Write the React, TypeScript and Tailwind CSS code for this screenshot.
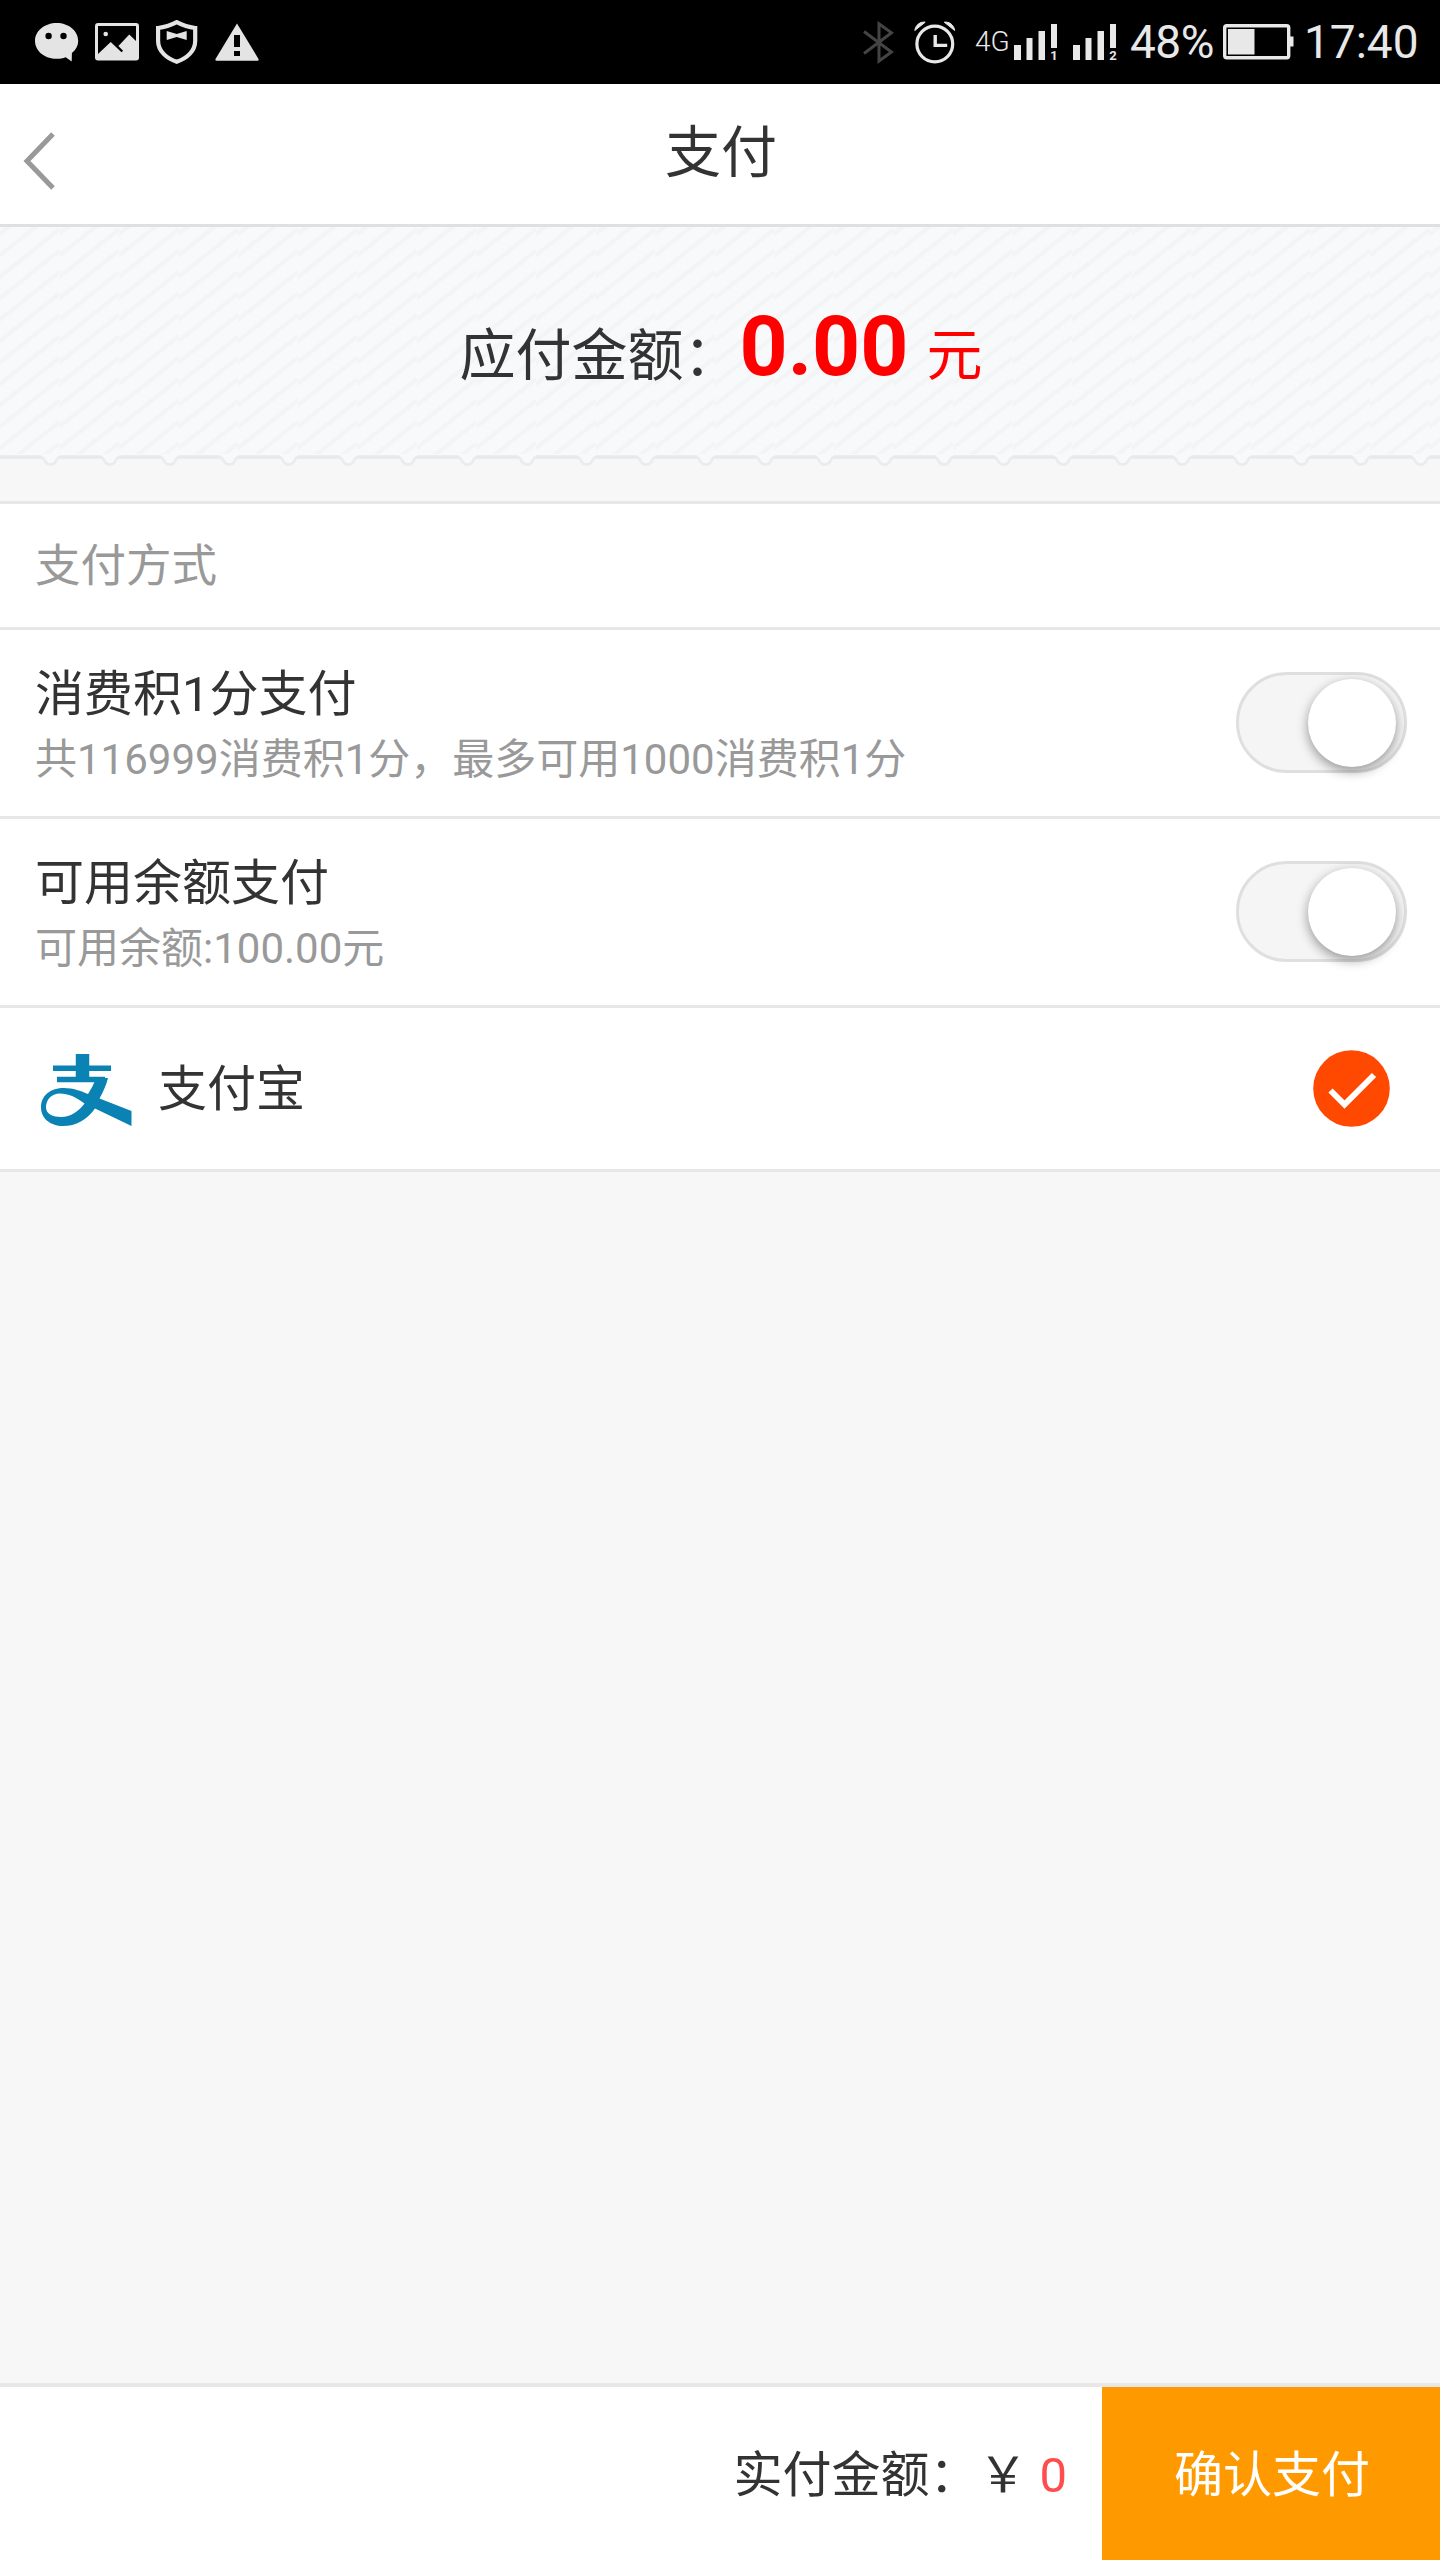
import type { ReactNode } from "react";

const WechatIcon = () => (
  <svg className="w-[44px] h-[40px]" viewBox="0 0 44 40">
    <path
      fill="#e4e4e4"
      fillRule="evenodd"
      d="M21.700 1C9.700 1 0 8.900 0 18.900s9.700 17.800 21.700 17.800c3.200 0 6.200-.5 9-1.500l6 4.200.2-8.300c4-3.300 6.300-7.600 6.300-12.200C43.200 8.900 33.700 1 21.700 1ZM13.600 10.800a3.200 3.200 0 1 1 0 6.400 3.200 3.200 0 0 1 0-6.400Zm14.900 0a3.200 3.200 0 1 1 0 6.400 3.200 3.200 0 0 1 0-6.400Z"
    />
  </svg>
);

const PictureIcon = () => (
  <svg className="w-[44px] h-[38px]" viewBox="0 0 44 38" fill="#e4e4e4">
    <rect x="1.500" y="1.500" width="41" height="34.500" rx="1.500" fill="none" stroke="#e4e4e4" strokeWidth="3" />
    <circle cx="10.700" cy="11" r="2.300" />
    <path d="M3 31 15.700 19l10.800 10.200 1.600-1.400-4.700-4.700L34.300 11.500 43 20v16H3Z" />
  </svg>
);

const ShieldIcon = () => (
  <svg className="w-[42px] h-[44px]" viewBox="0 0 42 44">
    <path
      d="M20.700 2.200C15 5.200 8.700 7.300 2.100 8v13c0 10 8.500 17.500 18.600 20.800C30.800 38.500 39.200 31 39.200 21V8c-6.500-.7-12.800-2.800-18.500-5.800Z"
      fill="none"
      stroke="#e4e4e4"
      strokeWidth="4.200"
    />
    <path d="m10.700 11 10 3 10-3v9l-10-3-10 3Z" fill="#e4e4e4" />
  </svg>
);

const WarningIcon = () => (
  <svg className="w-[44px] h-[38px]" viewBox="0 0 44 38">
    <path d="M22 .5 43.500 36q.5 1.700-1 1.700h-41Q0 37.700.5 36Z" fill="#e4e4e4" />
    <path d="M19 12h6v12h-6ZM19 28h6v5h-6Z" fill="#000" />
  </svg>
);

const BluetoothIcon = () => (
  <svg className="w-[31px] h-[43px]" viewBox="0 0 31 43">
    <path d="m1 10.500 27.500 20.500L16 40V2.800l12.500 9L1 32.500" fill="none" stroke="#444" strokeWidth="3" />
  </svg>
);

const AlarmIcon = () => (
  <svg className="w-[42px] h-[43px]" viewBox="0 0 42 43">
    <g fill="none" stroke="#e8e8e8">
      <circle cx="20.800" cy="23" r="17.900" strokeWidth="3.200" />
      <path d="M21.200 14v10.400h12" strokeWidth="3.400" />
    </g>
    <path d="M.8 9.500C1.500 4 6.500.3 11.200 1.200ZM40.700 9.500C40 4 35 .3 30.300 1.200Z" fill="#e8e8e8" stroke="#e8e8e8" />
  </svg>
);

const SignalIcon = ({ sim }: { sim: string }) => (
  <svg className="w-[44px] h-[37px]" viewBox="0 0 44 37" fill="#e8e8e8">
    <path d="M0 21h7v15H0ZM12.500 14h6v22h-6ZM24.500 7h6.500v29h-6.500ZM37 0h6v24h-6Z" />
    <text x="40" y="35.500" textAnchor="middle" fontFamily="Roboto, sans-serif" fontSize="13" fontWeight="700">
      {sim}
    </text>
  </svg>
);

const BatteryIcon = () => (
  <svg className="w-[71px] h-[36px]" viewBox="0 0 71 36" fill="#e8e8e8">
    <rect x="1.700" y="1.700" width="64" height="32" rx="2" fill="none" stroke="#e8e8e8" strokeWidth="3.400" />
    <path d="M5 5h26.500v25.500H5ZM67 12.500h3.500v10H67Z" />
  </svg>
);

const StatusBar = () => (
  <div className="h-[84px] bg-black text-[#e8e8e8] flex items-center justify-between">
    <div className="flex items-center pl-[35px]">
      <WechatIcon />
      <div className="ml-[16px]"><PictureIcon /></div>
      <div className="ml-[17px]"><ShieldIcon /></div>
      <div className="ml-[17px]"><WarningIcon /></div>
    </div>
    <div className="flex items-center pr-[21px]">
      <BluetoothIcon />
      <div className="ml-[20px]"><AlarmIcon /></div>
      <span className="ml-[19px] w-[37px] text-[28px] leading-none font-light">4G</span>
      <div className="ml-[2px]"><SignalIcon sim="1" /></div>
      <div className="ml-[15px]"><SignalIcon sim="2" /></div>
      <span className="ml-[13px] w-[86px] text-[46px] leading-none tracking-[-0.5px]">48%</span>
      <div className="ml-[7px]"><BatteryIcon /></div>
      <span className="ml-[10px] w-[115px] text-[46px] leading-none">17:40</span>
    </div>
  </div>
);

const NavBar = () => (
  <header className="h-[143px] bg-white border-b-[3px] border-[#e0e0e0] grid grid-cols-3 items-center">
    <svg className="ml-[23px] mt-[14px] w-[33px] h-[58px]" viewBox="0 0 33 58">
      <path d="M30 2 4 29l26 27" fill="none" stroke="#999" strokeWidth="5" />
    </svg>
    <h1 className="text-center text-[56px] leading-[80px] mt-[-2px] pl-[2px]">支付</h1>
  </header>
);

// Striped paper strip with a perforated lower edge
const TicketTexture = () => (
  <svg className="col-start-1 row-start-1 w-[1440px] h-[274px]" viewBox="0 0 1440 274">
    <defs>
      <pattern id="stripes" width="59.570" height="21.400" patternUnits="userSpaceOnUse">
        <rect width="59.570" height="21.400" fill="#f7f9fa" />
        <path
          d="M-2 8.600 59.500-40.600M-2 30 59.500-19.200M-2 51.400 59.500 2.200M-2 72.800 59.500 23.600"
          stroke="#f2f4f5"
          strokeWidth="4"
        />
      </pattern>
      <pattern id="edge" width="59.570" height="46" y="227" patternUnits="userSpaceOnUse">
        <path d="M0 0H59.570V3H58.500Q57 11 50.500 11T42 3H0Z" fill="#f7f9fa" />
        <path d="M41 3Q44 4 45.500 8 47 10.500 50.500 10.500T55.500 8Q57 4 59.570 3" fill="none" stroke="#e9ecec" strokeWidth="2.500" />
        <path d="M0 3H41.500" stroke="#e7eaea" strokeWidth="3.500" />
      </pattern>
    </defs>
    <rect width="1440" height="228" fill="url(#stripes)" />
    <rect y="227" width="1440" height="46" fill="url(#edge)" />
  </svg>
);

const AmountDue = () => (
  <section className="grid h-[274px] bg-[#f7f7f7]">
    <TicketTexture />
    <div className="col-start-1 row-start-1 flex items-baseline justify-center h-[228px] pt-[70px] pl-[2px] leading-[100px]">
      <span className="text-[56px]">应付金额：</span>
      <span className="text-[84px] font-bold text-[#f00]">0.00</span>
      <span className="ml-[18px] text-[56px] text-[#f00]">元</span>
    </div>
  </section>
);

const Toggle = () => (
  <div className="mt-[-2px] w-[171px] h-[101px] rounded-full border-[3px] border-[#dfdfdf] bg-[#f5f5f5] flex justify-end pt-[4px] pr-[8px]">
    <div className="w-[88px] h-[88px] rounded-full bg-white shadow-[0_4px_12px_rgba(0,0,0,0.4)]" />
  </div>
);

const ToggleRow = ({ title, children }: { title: string; children: ReactNode }) => (
  <div className="h-[189px] border-b-[3px] border-[#e7e7e7] flex items-center justify-between pl-[35px] pr-[33px]">
    <div className="pt-[6px]">
      <p className="text-[49px] leading-[68px]">{title}</p>
      <p className="text-[42px] leading-[62px] text-[#999]">{children}</p>
    </div>
    <Toggle />
  </div>
);

const AlipayLogo = () => (
  <svg className="mt-[5px] w-[92px] h-[74px]" viewBox="0 0 92 74">
    <g fill="none" stroke="#0a82b4">
      <path d="M41.500 0v27" strokeWidth="13.500" />
      <path d="M12 14.200h58" strokeWidth="5.500" />
      <path d="M16 25.500h48" strokeWidth="5.500" />
    </g>
    <path
      fill="#0a82b4"
      fillRule="evenodd"
      d="M55 24h12c-2 8-5 14-8.500 20.500L90.500 57v15L54 54.500C46 66 35 72 22 72 9 72 0 64 0 53.500 0 41 10 34 23 34c9 0 17 3 24 6 3-5 6-10 8-16ZM43.500 49.500C35 43 27 39.500 19 39.500 10 39.500 5 46 5 53.500 5 60 12 63 20 63c10 0 18-6 23.500-13.500Z"
    />
  </svg>
);

const AlipayRow = () => (
  <div className="h-[164px] border-b-[3px] border-[#e7e7e7] flex items-center pl-[41px] pr-[50.5px]">
    <AlipayLogo />
    <span className="ml-[25px] mt-[3px] text-[49px] leading-[70px]">支付宝</span>
    <svg className="ml-auto w-[77px] h-[77px]" viewBox="0 0 77 77">
      <circle cx="38.500" cy="38.500" r="38.300" fill="#ff4800" />
      <path d="m17.500 40.500 14 14L61 25" fill="none" stroke="#fff" strokeWidth="6" />
    </svg>
  </div>
);

const PayFooter = () => (
  <footer className="h-[177px] border-t-[4px] border-[#e7e7e7] bg-white flex">
    <div className="flex-1 flex items-center justify-end pt-[4px] pr-[35px] text-[49px]">
      <span>实付金额：</span>
      <span>￥</span>
      <span className="ml-[12px] text-[#ff4c4c]">0</span>
    </div>
    <button className="w-[338px] pt-[4px] pl-[2px] bg-[#ff9900] text-white text-[49px]">确认支付</button>
  </footer>
);

export default function App() {
  return (
    <div className="w-[1440px] h-[2560px] flex flex-col bg-[#f7f7f7] text-[#333] font-[Roboto,'Noto_Sans_CJK_SC',sans-serif]">
      <StatusBar />
      <NavBar />
      <AmountDue />
      <main className="bg-white border-t-[3px] border-[#e7e7e7]">
        <h2 className="h-[126px] border-b-[3px] border-[#e7e7e7] px-[35px] text-[45.5px] leading-[125px] text-[#999]">
          支付方式
        </h2>
        <ToggleRow title="消费积1分支付">共116999消费积1分，最多可用1000消费积1分</ToggleRow>
        <ToggleRow title="可用余额支付">可用余额:100.00元</ToggleRow>
        <AlipayRow />
      </main>
      <div className="flex-1" />
      <PayFooter />
    </div>
  );
}
